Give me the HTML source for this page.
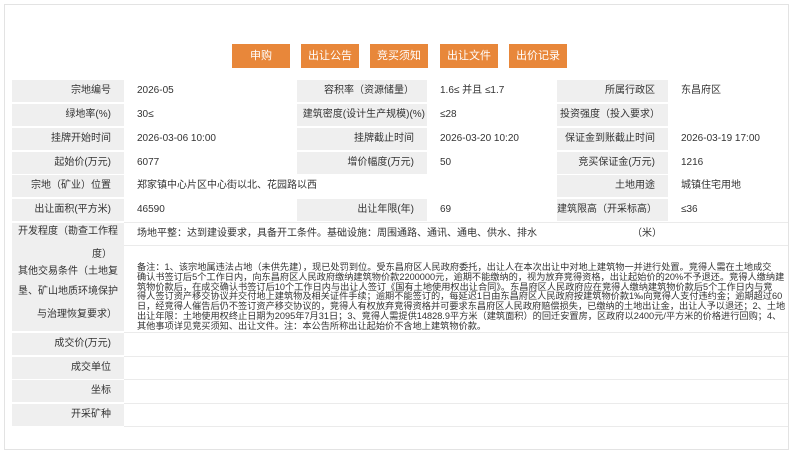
<!DOCTYPE html>
<html><head><meta charset="utf-8"><style>
body{margin:0;width:800px;height:455px;background:#fff;position:relative;overflow:hidden;font-family:"Liberation Sans","Noto Sans CJK SC",sans-serif;color:#333;font-size:10px}
.a{position:absolute;box-sizing:border-box}
.box{left:4px;top:4px;width:785px;height:446px;border:1px solid #e3e3e3}
.btn{top:44px;height:24px;width:58px;background:#e8873a;color:#fff;font-size:11px;line-height:24px;text-align:center}
.g{background:#efefef}
.l{text-align:right;padding-right:13px;line-height:22px;height:22px;white-space:nowrap}
.v{padding-left:13px;line-height:22px;height:22px;white-space:nowrap}
.ln{height:1px;background:#ebebeb}
.t{white-space:nowrap;line-height:14px}
.note{font-size:9.2px;line-height:9.8px;white-space:nowrap}
.note div{height:9.8px}
</style></head><body>
<div class="a box"></div>
<div class="a btn" style="left:232px">申购</div>
<div class="a btn" style="left:301px">出让公告</div>
<div class="a btn" style="left:370px">竞买须知</div>
<div class="a btn" style="left:440px">出让文件</div>
<div class="a btn" style="left:509px">出价记录</div>

<div class="a g l" style="left:12px;top:80px;width:112px">宗地编号</div>
<div class="a v" style="left:124px;top:80px">2026-05</div>
<div class="a g l" style="left:297px;top:80px;width:130px">容积率（资源储量）</div>
<div class="a v" style="left:427px;top:80px">1.6≤ 并且 ≤1.7</div>
<div class="a g l" style="left:557px;top:80px;width:111px">所属行政区</div>
<div class="a v" style="left:668px;top:80px">东昌府区</div>

<div class="a g l" style="left:12px;top:104px;width:112px">绿地率(%)</div>
<div class="a v" style="left:124px;top:104px">30≤</div>
<div class="a g" style="left:297px;top:104px;width:130px;height:22px;line-height:22px;text-align:right;padding-right:2px;white-space:nowrap">建筑密度(设计生产规模)(%)</div>
<div class="a v" style="left:427px;top:104px">≤28</div>
<div class="a g l" style="left:557px;top:104px;width:111px;text-align:left;padding-left:3px">投资强度（投入要求）</div>

<div class="a g l" style="left:12px;top:128px;width:112px">挂牌开始时间</div>
<div class="a v" style="left:124px;top:128px">2026-03-06 10:00</div>
<div class="a g l" style="left:297px;top:128px;width:130px">挂牌截止时间</div>
<div class="a v" style="left:427px;top:128px">2026-03-20 10:20</div>
<div class="a g l" style="left:557px;top:128px;width:111px">保证金到账截止时间</div>
<div class="a v" style="left:668px;top:128px">2026-03-19 17:00</div>

<div class="a g l" style="left:12px;top:152px;width:112px">起始价(万元)</div>
<div class="a v" style="left:124px;top:152px">6077</div>
<div class="a g l" style="left:297px;top:152px;width:130px">增价幅度(万元)</div>
<div class="a v" style="left:427px;top:152px">50</div>
<div class="a g l" style="left:557px;top:152px;width:111px">竞买保证金(万元)</div>
<div class="a v" style="left:668px;top:152px">1216</div>

<div class="a g l" style="left:12px;top:175px;width:112px">宗地（矿业）位置</div>
<div class="a v" style="left:124px;top:175px">郑家镇中心片区中心街以北、花园路以西</div>
<div class="a g l" style="left:557px;top:175px;width:111px">土地用途</div>
<div class="a v" style="left:668px;top:175px">城镇住宅用地</div>

<div class="a g l" style="left:12px;top:199px;width:112px">出让面积(平方米)</div>
<div class="a v" style="left:124px;top:199px">46590</div>
<div class="a g l" style="left:297px;top:199px;width:130px">出让年限(年)</div>
<div class="a v" style="left:427px;top:199px">69</div>
<div class="a g l" style="left:557px;top:199px;width:111px">建筑限高（开采标高）</div>
<div class="a v" style="left:668px;top:199px">≤36</div>
<div class="a" style="left:632px;top:223px;line-height:22px">（米）</div>
<div class="a ln" style="left:124px;top:245px;width:664px"></div>
<div class="a ln" style="left:124px;top:222px;width:664px"></div>

<div class="a g" style="left:12px;top:223px;width:112px;height:108px"></div>
<div class="a t" style="left:18px;top:225px">开发程度（勘查工作程</div>
<div class="a t" style="left:92px;top:248px">度）</div>
<div class="a t" style="left:18px;top:265px">其他交易条件（土地复</div>
<div class="a t" style="left:18px;top:285px">垦、矿山地质环境保护</div>
<div class="a t" style="left:37px;top:308px">与治理恢复要求）</div>
<div class="a v" style="left:124px;top:223px">场地平整：达到建设要求，具备开工条件。基础设施：周围通路、通讯、通电、供水、排水</div>
<div class="a note" style="left:137px;top:263px">
<div>备注：1、该宗地属违法占地（未供先建），现已处罚到位。受东昌府区人民政府委托，出让人在本次出让中对地上建筑物一并进行处置。竞得人需在土地成交</div>
<div>确认书签订后5个工作日内，向东昌府区人民政府缴纳建筑物价款2200000元，逾期不能缴纳的，视为放弃竞得资格，出让起始价的20%不予退还。竞得人缴纳建</div>
<div>筑物价款后，在成交确认书签订后10个工作日内与出让人签订《国有土地使用权出让合同》。东昌府区人民政府应在竞得人缴纳建筑物价款后5个工作日内与竞</div>
<div>得人签订资产移交协议并交付地上建筑物及相关证件手续；逾期不能签订的，每延迟1日由东昌府区人民政府按建筑物价款1‰向竞得人支付违约金；逾期超过60</div>
<div>日，经竞得人催告后仍不签订资产移交协议的，竞得人有权放弃竞得资格并可要求东昌府区人民政府赔偿损失，已缴纳的土地出让金，出让人予以退还；2、土地</div>
<div>出让年限：土地使用权终止日期为2095年7月31日；3、竞得人需提供14828.9平方米（建筑面积）的回迁安置房，区政府以2400元/平方米的价格进行回购；4、</div>
<div>其他事项详见竞买须知、出让文件。注：本公告所称出让起始价不含地上建筑物价款。</div>
</div>

<div class="a ln" style="left:124px;top:332px;width:664px"></div>
<div class="a g l" style="left:12px;top:333px;width:112px">成交价(万元)</div>
<div class="a ln" style="left:124px;top:356px;width:664px"></div>
<div class="a g l" style="left:12px;top:357px;width:112px">成交单位</div>
<div class="a ln" style="left:124px;top:379px;width:664px"></div>
<div class="a g l" style="left:12px;top:380px;width:112px">坐标</div>
<div class="a ln" style="left:124px;top:403px;width:664px"></div>
<div class="a g l" style="left:12px;top:404px;width:112px">开采矿种</div>
<div class="a ln" style="left:124px;top:426px;width:664px"></div>
</body></html>
